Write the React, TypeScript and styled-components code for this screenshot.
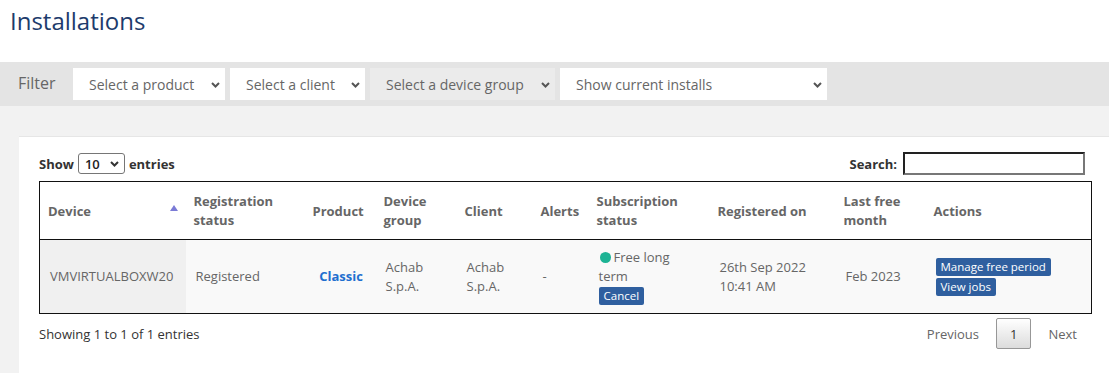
import React from "react";
import styled, { createGlobalStyle } from "styled-components";

const GlobalStyle = createGlobalStyle`
  html, body { margin: 0; padding: 0; background: #f2f2f2; }
  body { font-family: "Open Sans", "DejaVu Sans", sans-serif; color: #333; }
  * { box-sizing: border-box; }
`;

const Page = styled.div`
  width: 1109px;
  min-height: 373px;
  display: flex;
  flex-direction: column;
  background: #f2f2f2;
`;

const Header = styled.header`
  background: #fff;
  height: 62px;
  padding: 4px 10px 0;
`;

const Title = styled.h1`
  margin: 0;
  font-size: 24px;
  line-height: 33px;
  font-weight: 400;
  color: #1d3b6c;
`;

const FilterBar = styled.div`
  height: 44px;
  background: #e4e4e4;
  display: flex;
  align-items: center;
  padding-left: 18px;
  gap: 5px;
`;

const FilterLabel = styled.span`
  font-size: 16px;
  color: #666;
  width: 50px;
  margin-top: -3px;
`;

const SelectWrap = styled.div<{ $w: number }>`
  position: relative;
  width: ${(p) => p.$w}px;
  height: 32px;
`;

const FilterSelect = styled.select<{ $disabled?: boolean }>`
  appearance: none;
  -webkit-appearance: none;
  width: 100%;
  height: 100%;
  border: none;
  outline: none;
  border-radius: 0;
  background: ${(p) => (p.$disabled ? "#ebebeb" : "#fff")};
  color: #666;
  font-family: "Open Sans", sans-serif;
  font-size: 14px;
  padding: 0 0 0 16px;
`;

const Chevron = styled.svg<{ $right: number; $top: number }>`
  position: absolute;
  right: ${(p) => p.$right}px;
  top: ${(p) => p.$top}px;
  pointer-events: none;
`;

const ChevronIcon = ({ right, top, color = "#555" }: { right: number; top: number; color?: string }) => (
  <Chevron $right={right} $top={top} width="9" height="6" viewBox="0 0 9 6">
    <path d="M1 1 L4.5 4.5 L8 1" fill="none" stroke={color} strokeWidth="2" />
  </Chevron>
);

const Content = styled.div`
  flex: 1;
  padding: 30px 0 0 19px;
`;

const Panel = styled.section`
  background: #fff;
  border-top: 1px solid #e6e6e6;
  padding: 15px 17px 24px 20px;
  min-height: 237px;
`;

const TopRow = styled.div`
  display: flex;
  justify-content: space-between;
  align-items: center;
  height: 23px;
  margin-bottom: 6px;
`;

const BoldLabel = styled.label`
  font-size: 13px;
  font-weight: 700;
  color: #333;
  display: flex;
  align-items: center;
  gap: 4px;
`;

const SmallSelectWrap = styled.div`
  position: relative;
  width: 47px;
  height: 21px;
`;

const SmallSelect = styled.select`
  appearance: none;
  -webkit-appearance: none;
  width: 100%;
  height: 100%;
  border: 1px solid #767676;
  border-radius: 3px;
  background: #fff;
  font-family: "Open Sans", sans-serif;
  font-size: 13px;
  font-weight: 600;
  color: #222;
  padding: 0 0 0 6px;
`;

const SearchInput = styled.input`
  width: 182px;
  height: 23px;
  border: 2px solid;
  border-color: #222 #777 #777 #222;
  padding: 0 4px;
  margin-left: 2px;
  margin-right: 7px;
  font-family: "Open Sans", sans-serif;
`;

const Table = styled.table`
  width: 1053px;
  border-collapse: collapse;
  table-layout: fixed;
  border: 1px solid #111;
  font-size: 13px;
`;

const Th = styled.th<{ $w?: number }>`
  width: ${(p) => (p.$w ? `${p.$w}px` : "auto")};
  text-align: left;
  font-weight: 700;
  color: #666;
  line-height: 19px;
  padding: 10px 8px 9px;
  border-bottom: 1px solid #111;
  vertical-align: middle;
  position: relative;
`;

const SortArrow = styled.span`
  position: absolute;
  right: 8px;
  top: 23px;
  width: 0;
  height: 0;
  border-left: 4px solid transparent;
  border-right: 4px solid transparent;
  border-bottom: 6px solid #7b7bd6;
`;

const Td = styled.td<{ $sorted?: boolean; $pr?: number; $center?: boolean }>`
  background: ${(p) => (p.$sorted ? "#f0f0f0" : "#f9f9f9")};
  color: #666;
  line-height: 19px;
  text-align: ${(p) => (p.$center ? "center" : "left")};
  padding: 8px ${(p) => p.$pr ?? 8}px 8px 10px;
  vertical-align: middle;
  height: 72px;
`;

const ProductLink = styled.a`
  color: #1f6fcf;
  font-weight: 700;
  text-decoration: none;
`;

const Dot = styled.span`
  display: inline-block;
  width: 11px;
  height: 11px;
  border-radius: 50%;
  background: #1db394;
  margin-right: 3px;
  margin-left: 1px;
  vertical-align: -1px;
`;

const Badge = styled.span`
  display: inline-block;
  background: #2f5f9f;
  color: #fff;
  font-size: 11.5px;
  line-height: 18px;
  padding: 0 5px;
  border-radius: 2px;
`;

const BadgeStack = styled.div`
  display: flex;
  flex-direction: column;
  align-items: flex-start;
  gap: 2px;
`;

const Footer = styled.div`
  display: flex;
  justify-content: space-between;
  align-items: center;
  width: 1053px;
  margin-top: 4px;
`;

const Info = styled.div`
  font-size: 13px;
  color: #333;
`;

const Pager = styled.div`
  display: flex;
  align-items: center;
  font-size: 13px;
  color: #666;
`;

const PageLink = styled.span<{ $current?: boolean }>`
  display: inline-flex;
  align-items: center;
  justify-content: center;
  height: 31px;
  padding: 0 ${(p) => (p.$current ? 13 : 14)}px;
  margin-left: 2px;
  color: ${(p) => (p.$current ? "#333" : "#666")};
  border: 1px solid ${(p) => (p.$current ? "#979797" : "transparent")};
  border-radius: 2px;
  background: ${(p) => (p.$current ? "linear-gradient(to bottom, #fff 0%, #dcdcdc 100%)" : "transparent")};
`;

export default function App() {
  return (
    <>
      <GlobalStyle />
      <Page>
        <Header>
          <Title>Installations</Title>
        </Header>
        <FilterBar>
          <FilterLabel>Filter</FilterLabel>
          <SelectWrap $w={152}>
            <FilterSelect><option>Select a product</option></FilterSelect>
            <ChevronIcon right={5} top={14} />
          </SelectWrap>
          <SelectWrap $w={135}>
            <FilterSelect><option>Select a client</option></FilterSelect>
            <ChevronIcon right={5} top={14} />
          </SelectWrap>
          <SelectWrap $w={185}>
            <FilterSelect $disabled><option>Select a device group</option></FilterSelect>
            <ChevronIcon right={5} top={14} />
          </SelectWrap>
          <SelectWrap $w={267}>
            <FilterSelect><option>Show current installs</option></FilterSelect>
            <ChevronIcon right={5} top={14} />
          </SelectWrap>
        </FilterBar>
        <Content>
          <Panel>
            <TopRow>
              <BoldLabel>
                Show
                <SmallSelectWrap>
                  <SmallSelect><option>10</option></SmallSelect>
                  <ChevronIcon right={6} top={8} color="#333" />
                </SmallSelectWrap>
                entries
              </BoldLabel>
              <BoldLabel>
                Search:
                <SearchInput type="text" />
              </BoldLabel>
            </TopRow>
            <Table>
              <thead>
                <tr>
                  <Th $w={146}>Device<SortArrow /></Th>
                  <Th $w={119}>Registration status</Th>
                  <Th $w={71}>Product</Th>
                  <Th $w={81}>Device group</Th>
                  <Th $w={76}>Client</Th>
                  <Th $w={56}>Alerts</Th>
                  <Th $w={121}>Subscription status</Th>
                  <Th $w={126}>Registered on</Th>
                  <Th $w={90}>Last free month</Th>
                  <Th>Actions</Th>
                </tr>
              </thead>
              <tbody>
                <tr>
                  <Td $sorted>VMVIRTUALBOXW20</Td>
                  <Td>Registered</Td>
                  <Td $center><ProductLink href="#">Classic</ProductLink></Td>
                  <Td>Achab S.p.A.</Td>
                  <Td>Achab S.p.A.</Td>
                  <Td>-</Td>
                  <Td $pr={14}>
                    <Dot />Free long term
                    <br />
                    <Badge>Cancel</Badge>
                  </Td>
                  <Td>26th Sep 2022 10:41 AM</Td>
                  <Td>Feb 2023</Td>
                  <Td>
                    <BadgeStack>
                      <Badge>Manage free period</Badge>
                      <Badge>View jobs</Badge>
                    </BadgeStack>
                  </Td>
                </tr>
              </tbody>
            </Table>
            <Footer>
              <Info>Showing 1 to 1 of 1 entries</Info>
              <Pager>
                <PageLink>Previous</PageLink>
                <PageLink $current>1</PageLink>
                <PageLink>Next</PageLink>
              </Pager>
            </Footer>
          </Panel>
        </Content>
      </Page>
    </>
  );
}
